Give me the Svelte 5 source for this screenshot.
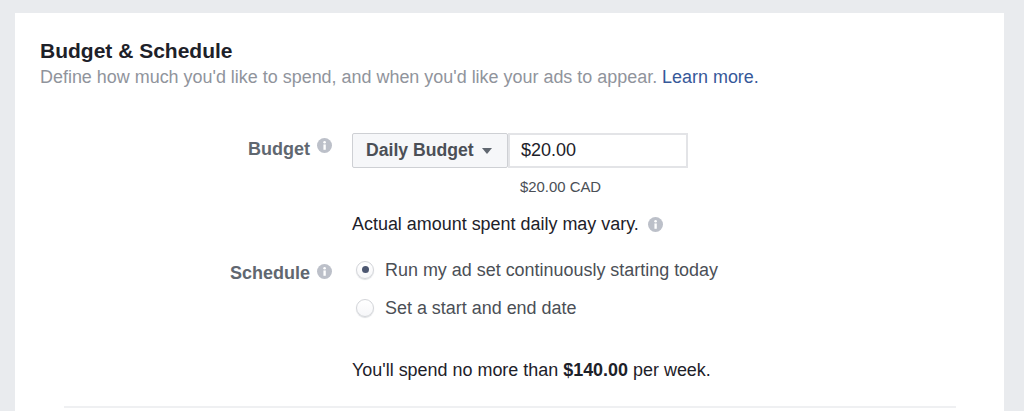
{#snippet infoIcon()}
  <svg class="info" width="15" height="15" viewBox="0 0 14 14" aria-hidden="true">
    <circle cx="7" cy="7" r="7" fill="#bcc0c9" />
    <rect x="6" y="6" width="2.2" height="5" fill="#fff" />
    <circle cx="7.1" cy="4" r="1.2" fill="#fff" />
  </svg>
{/snippet}

<div class="page">
  <section class="card">
    <h2>Budget &amp; Schedule</h2>
    <p class="sub">Define how much you'd like to spend, and when you'd like your ads to appear. <a href="#top">Learn more.</a></p>

    <div class="row budget">
      <div class="label"><span>Budget</span>{@render infoIcon()}</div>
      <div class="field">
        <div class="controls">
          <button class="select">Daily Budget<i class="caret"></i></button>
          <div class="input">$20.00</div>
        </div>
        <div class="cad">$20.00 CAD</div>
        <div class="note">Actual amount spent daily may vary.{@render infoIcon()}</div>
      </div>
    </div>

    <div class="row schedule">
      <div class="label"><span>Schedule</span>{@render infoIcon()}</div>
      <div class="field">
        <div class="radio-row"><span class="radio on"></span>Run my ad set continuously starting today</div>
        <div class="radio-row"><span class="radio"></span>Set a start and end date</div>
        <div class="spend">You'll spend no more than <b>$140.00</b> per week.</div>
      </div>
    </div>

    <hr />
  </section>
</div>

<style>
  :global(body) { margin: 0; background: #e9ebee; }
  .page {
    height: 411px;
    box-sizing: border-box;
    padding: 13px 20px 0 15px;
    overflow: hidden;
    font-family: "Liberation Sans", Arial, sans-serif;
  }
  .card {
    height: 398px;
    box-sizing: border-box;
    background: #fff;
    padding: 27px 48px 0 25px;
  }
  h2 {
    margin: 0;
    font-size: 21px;
    line-height: 22px;
    font-weight: 700;
    color: #1d2129;
  }
  .sub {
    margin: 5px 0 0;
    font-size: 17.95px;
    line-height: 20px;
    color: #90949c;
  }
  .sub a { color: #365899; text-decoration: none; }
  .row { display: flex; }
  .budget { margin-top: 46px; }
  .schedule { margin-top: 26px; }
  .label {
    width: 292px;
    flex: none;
    display: flex;
    justify-content: flex-end;
    gap: 7px;
    box-sizing: border-box;
    font-size: 18px;
    font-weight: 700;
    line-height: 20px;
    color: #606770;
  }
  .budget .label { padding-top: 6px; }
  .budget .label .info { margin-top: -1px; }
  .schedule .label { padding-top: 3px; }
  .schedule .label .info { margin-top: 1px; }
  .field { margin-left: 20px; }
  .controls { display: flex; height: 35px; }
  .select {
    display: flex;
    align-items: center;
    width: 156px;
    box-sizing: border-box;
    padding: 0 0 0 13px;
    background: #f6f7f9;
    border: 1px solid #ced0d4;
    border-radius: 2px;
    font: 700 17.6px "Liberation Sans", Arial, sans-serif;
    color: #4b4f56;
  }
  .caret {
    margin-left: 8px;
    margin-top: 1px;
    border-left: 5.5px solid transparent;
    border-right: 5.5px solid transparent;
    border-top: 6px solid #606770;
  }
  .input {
    width: 180px;
    box-sizing: border-box;
    padding-left: 11px;
    border: 2px solid #e3e4e7;
    font-size: 18px;
    line-height: 31px;
    color: #1d2129;
  }
  .cad {
    margin: 11px 0 0 168px;
    font-size: 14.9px;
    line-height: 16px;
    color: #4b4f56;
  }
  .note {
    display: flex;
    align-items: center;
    gap: 9px;
    margin-top: 19px;
    font-size: 17.95px;
    line-height: 20px;
    color: #1d2129;
  }
  .radio-row {
    display: flex;
    align-items: center;
    height: 20px;
    margin-left: 4px;
    font-size: 17.95px;
    color: #4b4f56;
  }
  .radio-row + .radio-row { margin-top: 18px; }
  .radio {
    position: relative;
    width: 18px;
    height: 18px;
    box-sizing: border-box;
    margin-right: 11px;
    border: 1px solid #d3d5d9;
    border-radius: 50%;
    background: linear-gradient(#fff, #f6f7f9);
    box-shadow: 0 1px 1px #dddfe2;
  }
  .radio.on::after {
    content: "";
    position: absolute;
    left: 5px;
    top: 4px;
    width: 7px;
    height: 7px;
    border-radius: 50%;
    background: #4b5670;
  }
  .spend {
    margin-top: 42px;
    font-size: 17.95px;
    line-height: 20px;
    color: #1d2129;
  }
  hr {
    margin: 26px 0 0 24px;
    height: 2px;
    border: 0;
    background: #eff0f2;
  }
</style>
